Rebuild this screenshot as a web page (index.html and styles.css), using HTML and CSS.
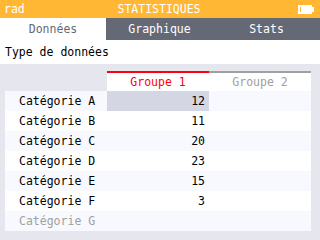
FILE: index.html
```html
<!DOCTYPE html>
<html lang="fr">
<head>
  <meta charset="UTF-8">
  <title>Statistiques</title>
  <link rel="stylesheet" href="styles.css">
</head>
<body>
  <div class="screen">
    <div class="titlebar">
      <span class="angle">rad</span>
      <span class="title">STATISTIQUES</span>
      <svg class="battery" width="16" height="9" viewBox="0 0 16 9">
        <rect x="0" y="0" width="2" height="9" fill="#fff"/>
        <rect x="0" y="0" width="13" height="2" fill="#fff"/>
        <rect x="0" y="7" width="13" height="2" fill="#fff"/>
        <rect x="3" y="2" width="10" height="5" fill="#fff"/>
        <rect x="13" y="0" width="1" height="9" fill="#fff"/>
        <rect x="14" y="2" width="2" height="5" fill="#fff"/>
      </svg>
    </div>

    <div class="tabs">
      <div class="tab active">Données</div>
      <div class="tab">Graphique</div>
      <div class="tab">Stats</div>
    </div>

    <div class="subtitle">Type de données</div>

    <div class="content">
      <div class="table">
        <div class="cell corner"></div>
        <div class="cell head selected-col">Groupe 1</div>
        <div class="cell head">Groupe 2</div>

        <div class="cell label tint">Catégorie A</div>
        <div class="cell value selected">12</div>
        <div class="cell value tint"></div>

        <div class="cell label">Catégorie B</div>
        <div class="cell value">11</div>
        <div class="cell value"></div>

        <div class="cell label tint">Catégorie C</div>
        <div class="cell value tint">20</div>
        <div class="cell value tint"></div>

        <div class="cell label">Catégorie D</div>
        <div class="cell value">23</div>
        <div class="cell value"></div>

        <div class="cell label tint">Catégorie E</div>
        <div class="cell value tint">15</div>
        <div class="cell value tint"></div>

        <div class="cell label">Catégorie F</div>
        <div class="cell value">3</div>
        <div class="cell value"></div>

        <div class="cell label tint faded">Catégorie G</div>
        <div class="cell value tint"></div>
        <div class="cell value tint"></div>
      </div>
    </div>
  </div>
</body>
</html>
```

FILE: styles.css
```css
body {
  margin: 0;
  padding: 0;
  font-family: 'DejaVu Sans Mono', 'Liberation Mono', monospace;
  font-size: 11.5px;
}

.screen {
  width: 320px;
  height: 240px;
  overflow: hidden;
  background: #ffffff;
}

.titlebar {
  height: 18px;
  background: #ffb734;
  color: #ffffff;
  display: grid;
  grid-template-columns: 1fr auto 1fr;
  align-items: center;
  padding: 0 6px 0 4px;
}

.title {
  text-align: center;
}

.battery {
  justify-self: end;
}

.tabs {
  height: 22px;
  background: #656975;
  display: grid;
  grid-template-columns: 106px 107px 107px;
}

.tab {
  color: #ffffff;
  display: flex;
  align-items: center;
  justify-content: center;
}

.tab.active {
  background: #ffffff;
  color: #656975;
}

.subtitle {
  height: 24px;
  padding-left: 5px;
  display: flex;
  align-items: center;
  color: #000000;
}

.content {
  height: 176px;
  background: #e5e6ee;
  padding: 7px 9px 0 5px;
  box-sizing: border-box;
}

.table {
  display: grid;
  grid-template-columns: 102px 102px 102px;
  grid-auto-rows: 20px;
}

.cell {
  display: flex;
  align-items: center;
  background: #ffffff;
  color: #000000;
  box-sizing: border-box;
}

.cell.corner {
  background: transparent;
}

.cell.head {
  justify-content: center;
  border-top: 2px solid #a0a0a0;
  color: #a0a0a0;
}

.cell.head.selected-col {
  border-top-color: #ff000c;
  color: #ff000c;
}

.cell.label {
  padding-left: 14px;
}

.cell.value {
  justify-content: flex-end;
  padding-right: 4px;
}

.cell.tint {
  background: #f7f9fe;
}

.cell.selected {
  background: #d4d6e4;
}

.cell.faded {
  color: #a0a0a0;
}
```
